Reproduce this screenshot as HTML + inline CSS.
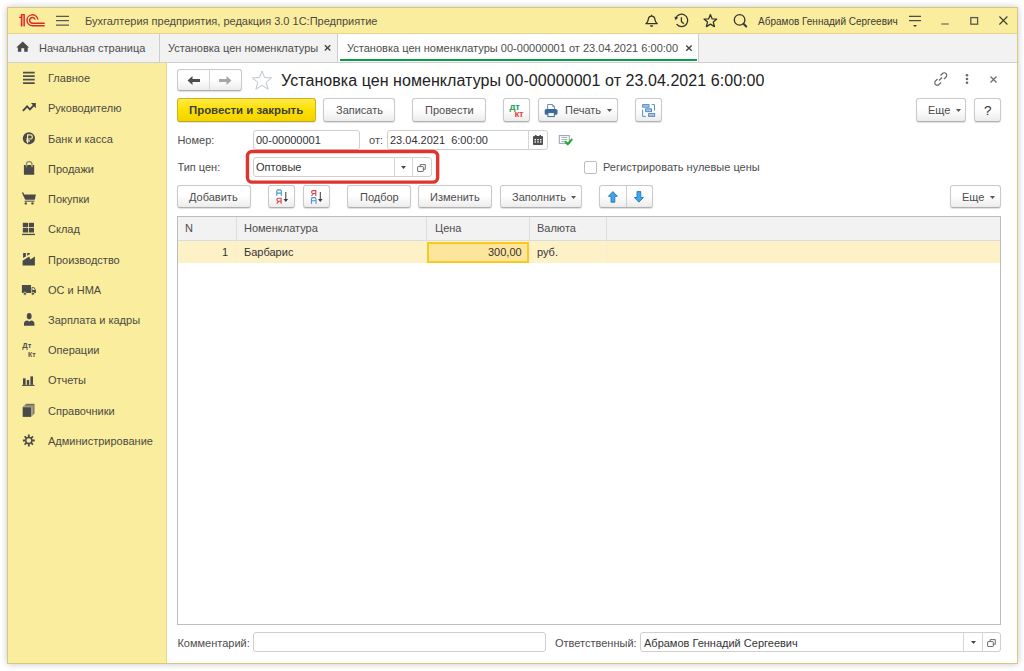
<!DOCTYPE html>
<html><head><meta charset="utf-8">
<style>
*{box-sizing:border-box;margin:0;padding:0}
html,body{width:1024px;height:671px;overflow:hidden;background:#fff;font-family:"Liberation Sans",sans-serif;}
.a{position:absolute}
.t{position:absolute;font-size:11px;line-height:13px;white-space:nowrap;color:#4d4d4d}
#win{position:absolute;left:7px;top:7px;width:1011px;height:657px;border:1px solid #d8c77f;box-shadow:0 0 7px rgba(0,0,0,.22);background:#fbed9e;overflow:hidden}
.btn{position:absolute;border:1px solid #c9c9c9;border-bottom-color:#b0b0b0;border-radius:3px;background:linear-gradient(#fff 0,#fff 45%,#ececec 100%);box-shadow:0 1px 1px rgba(0,0,0,.13)}
.fld{position:absolute;border:1px solid #cfcfcf;border-radius:3px;background:#fff}
svg{position:absolute;overflow:visible}
</style></head><body>
<div id="win"></div>

<!-- title bar -->
<div class="a" style="left:8px;top:8px;width:1009px;height:26px;background:#fbed9e;border-bottom:1px solid #e2d48c"></div>
<div class="t" style="left:85px;top:15px;color:#4a4a40">Бухгалтерия предприятия, редакция 3.0 1С:Предприятие</div>
<div class="t" style="left:758px;top:15px;font-size:10px;color:#3a3a35">Абрамов Геннадий Сергеевич</div>

<!-- tab bar -->
<div class="a" style="left:8px;top:34px;width:1009px;height:29px;background:linear-gradient(#f4f4ee 0,#f2f2f2 1px);border-bottom:1px solid #cfcfcf"></div>
<div class="a" style="left:159px;top:34px;width:1px;height:28px;background:#cdcdcd"></div>
<div class="a" style="left:337px;top:34px;width:1px;height:28px;background:#cdcdcd"></div>
<div class="a" style="left:338px;top:34px;width:360px;height:28px;background:#fff"></div>
<div class="a" style="left:698px;top:34px;width:1px;height:28px;background:#cdcdcd"></div>
<div class="a" style="left:340px;top:59px;width:357px;height:2px;background:#0a9a48"></div>
<div class="t" style="left:39px;top:41.5px;color:#4d4d4d">Начальная страница</div>
<div class="t" style="left:168px;top:41.5px;color:#4d4d4d">Установка цен номенклатуры</div>
<div class="t" style="left:347px;top:41.5px;color:#4d4d4d;letter-spacing:0.02px">Установка цен номенклатуры 00-00000001 от 23.04.2021 6:00:00</div>

<!-- sidebar -->
<div class="a" style="left:8px;top:63px;width:159px;height:600px;background:#fbed9e;border-right:1px solid #e3d89c"></div>


<!-- sidebar items -->
<div class="t" style="left:48px;top:72px;color:#4a4a42">Главное</div>
<div class="t" style="left:48px;top:102px;color:#4a4a42">Руководителю</div>
<div class="t" style="left:48px;top:133px;color:#4a4a42">Банк и касса</div>
<div class="t" style="left:48px;top:163px;color:#4a4a42">Продажи</div>
<div class="t" style="left:48px;top:193px;color:#4a4a42">Покупки</div>
<div class="t" style="left:48px;top:223px;color:#4a4a42">Склад</div>
<div class="t" style="left:48px;top:254px;color:#4a4a42">Производство</div>
<div class="t" style="left:48px;top:284px;color:#4a4a42">ОС и НМА</div>
<div class="t" style="left:48px;top:314px;color:#4a4a42">Зарплата и кадры</div>
<div class="t" style="left:48px;top:344px;color:#4a4a42">Операции</div>
<div class="t" style="left:48px;top:374px;color:#4a4a42">Отчеты</div>
<div class="t" style="left:48px;top:405px;color:#4a4a42">Справочники</div>
<div class="t" style="left:48px;top:435px;color:#4a4a42">Администрирование</div>


<!-- title bar icons -->
<svg style="left:0;top:0" width="1024" height="64" viewBox="0 0 1024 64">
 <g fill="none" stroke="#dd2a28" stroke-width="1.4" stroke-linecap="round">
  <rect x="22.2" y="15.3" width="1.4" height="11" fill="#eb9c80" stroke="none"/>
  <path d="M19.6 17.4 H21.5 M21.5 25.9 V14.6 H24.2 V25.9"/>
  <path d="M37.77 19.05 A5.45 5.45 0 1 0 32.45 25.7 H44.2"/>
  <path d="M34.91 19.06 A2.8 2.8 0 1 0 32.45 23.2 H44.2"/>
 </g>
 <g stroke="#5b5a52" stroke-width="1.25"><path d="M56 16.3 H69 M56 20.6 H69 M56 25.1 H69"/></g>
 <g fill="none" stroke="#35352f" stroke-width="1.3" stroke-linejoin="round">
  <path d="M645.9 23.7 Q647.8 22.2 648.2 19.8 L648.5 18.4 Q649.1 16.2 651.6 16.2 Q654.1 16.2 654.7 18.4 L655 19.8 Q655.4 22.2 657.3 23.7 Z"/>
  <path d="M681.4 17.2 V21.6 L683.8 23.8"/>
  <path d="M675.6 18.5 A6.2 6.2 0 1 1 676.6 24.2"/>
  <path d="M710.4 14.6 L712.2 18.9 L716.8 19.1 L713.3 22.1 L714.4 26.6 L710.4 24.1 L706.4 26.6 L707.5 22.1 L704.0 19.1 L708.6 18.9 Z"/>
  <circle cx="739.6" cy="19.9" r="5.3"/>
 </g>
 <path d="M651.6 14.3 L652.6 16.2 L650.6 16.2 Z" fill="#3c3c38"/>
 <path d="M649.9 25.3 H653.3 Q653.1 27 651.6 27 Q650.1 27 649.9 25.3 Z" fill="#3c3c38"/>
 <path d="M674.3 16.8 L678.3 17.4 L675.6 20.2 Z" fill="#3c3c38"/>
 <path d="M743.5 23.8 L746.2 26.5" stroke="#3c3c38" stroke-width="2.1" stroke-linecap="round"/>
 <g stroke="#4e4d46" stroke-width="1.15"><path d="M909 16.4 H921 M909 20.6 H921"/></g>
 <path d="M913 24.9 H917 L915 26.9 Z" fill="#3c3c38"/>
 <path d="M941.2 24 H948.8" stroke="#7a7560" stroke-width="1.3"/>
 <rect x="970.8" y="17.6" width="6.8" height="6.6" fill="none" stroke="#5a584c" stroke-width="1.3"/>
 <path d="M999.4 16.5 L1007.4 24.5 M1007.4 16.5 L999.4 24.5" stroke="#3c3c38" stroke-width="1.1"/>
 <!-- home -->
 <path d="M22.7 41.4 L29.1 47.6 L27.7 47.6 L27.7 51.8 L24.2 51.8 L24.2 48.2 L21.3 48.2 L21.3 51.8 L17.9 51.8 L17.9 47.6 L16.3 47.6 Z" fill="#4a4a4a"/>
 <g stroke="#454545" stroke-width="1.4"><path d="M324.8 45.3 L330.3 50.5 M330.3 45.3 L324.8 50.5"/><path d="M686.2 45.5 L691.7 50.7 M691.7 45.5 L686.2 50.7"/></g>
</svg>

<!-- sidebar icons -->
<svg style="left:0;top:60px" width="40" height="400" viewBox="0 60 40 400">
 <g stroke="#4f4f4a" stroke-width="1.6"><path d="M23 72.6 H34.7 M23 76.1 H34.7 M23 79.6 H34.7 M23 83.1 H34.7"/></g>
 <path d="M22.9 110.8 L27.1 106.4 L29.9 109.3 L34 105.2" fill="none" stroke="#454545" stroke-width="1.9" stroke-linejoin="miter"/>
 <path d="M30.9 103 L35.8 103 L35.8 108.2 Z" fill="#454545"/>
 <circle cx="28.9" cy="138.3" r="6.1" fill="#4a4a4a"/>
 <path d="M27.6 143.3 V134.9 H30.2 Q32.3 134.9 32.3 136.9 Q32.3 139 30.2 139 H26 M26 140.8 H30" fill="none" stroke="#f4e7a3" stroke-width="1.2"/>
 <path d="M23.9 165 H25.6 L26.4 167.6 L27.3 165 H31.1 L32 167.6 L32.8 165 H34.2 V174.7 H23.9 Z" fill="#4a4a4a"/>
 <path d="M26.4 167.3 V164.3 Q26.4 161.7 29.2 161.7 Q32 161.7 32 164.3 V167.3" fill="none" stroke="#8f8a68" stroke-width="1.2"/>
 <path d="M21.8 192.6 H23.4 L24.2 194.5 H35.9 L34.8 199.8 H25.2 Z" fill="#4a4a4a"/>
 <path d="M24.6 201.2 H34.5" stroke="#4a4a4a" stroke-width="1"/>
 <circle cx="25.8" cy="203.4" r="1.2" fill="#4a4a4a"/><circle cx="32.5" cy="203.4" r="1.2" fill="#4a4a4a"/>
 <g fill="#4a4a4a"><rect x="22.8" y="222.8" width="5.2" height="4.4"/><rect x="28.8" y="222.8" width="5.2" height="4.4"/><rect x="22.8" y="228" width="5.2" height="4.5"/><rect x="28.8" y="228" width="5.2" height="4.5"/><rect x="22" y="233.8" width="13" height="1.3"/></g>
 <path d="M22.6 265.4 V260.7 L29.2 256.6 L30.3 259.6 L34.9 256.6 V265.4 Z M23.1 253.1 H25.9 V256.5 L23.1 258.1 Z M27.2 253.1 H29.8 V254.2 L27.2 255.7 Z" fill="#4a4a4a"/>
 <path d="M21.9 285.1 H31 V293 H21.9 Z M31.6 287.2 H34.2 L35.9 290 V293 H31.6 Z" fill="#4a4a4a"/>
 <path d="M32.4 288 H33.8 L34.9 290 H32.4 Z" fill="#f4e7a3"/>
 <circle cx="24.9" cy="293.7" r="1.5" fill="#4a4a4a" stroke="#fbed9e" stroke-width="0.7"/><circle cx="32.9" cy="293.7" r="1.5" fill="#4a4a4a" stroke="#fbed9e" stroke-width="0.7"/>
 <ellipse cx="29.2" cy="316.2" rx="2.4" ry="3.1" fill="#4a4a4a"/>
 <path d="M24 325.8 V323.5 Q24 320.6 27.3 320.4 L29.2 321.6 L31.1 320.4 Q34.4 320.6 34.4 323.5 V325.8 Z" fill="#4a4a4a"/>
 <g fill="#4a4a4a"><rect x="23" y="378.3" width="2.6" height="6.6"/><rect x="26.8" y="380" width="2.4" height="4.9"/><rect x="30.4" y="376.4" width="2.6" height="8.5"/><rect x="22" y="384.9" width="12.6" height="1"/></g>
 <path d="M25.6 404.6 H34.5 V413.6 L33 415 V405.9 H24 Z" fill="#7d7a66"/>
 <path d="M23.6 405.8 H33 V415.2 L31 416.9 V407.2 H22.6 Z" fill="#a4a084"/>
 <path d="M25.6 404.3 H34.5" stroke="#555" stroke-width="0.9"/>
 <rect x="22.7" y="407.2" width="8.3" height="9.7" fill="#4a4a4a"/>
 <g transform="translate(28.8 440.5)">
  <circle r="3.05" fill="none" stroke="#4a4a4a" stroke-width="1.4"/>
  <g stroke="#4a4a4a" stroke-width="1.8" stroke-linecap="butt"><path d="M0 -5.9 V-3.2 M0 3.2 V5.9 M-5.9 0 H-3.2 M3.2 0 H5.9 M-4.2 -4.2 L-2.3 -2.3 M2.3 2.3 L4.2 4.2 M-4.2 4.2 L-2.3 2.3 M2.3 -2.3 L4.2 -4.2"/></g>
 </g>
</svg>
<div class="a" style="left:22.3px;top:342px;font-size:7.5px;line-height:8px;font-weight:bold;color:#4f4f4f">Дт</div>
<div class="a" style="left:28px;top:350.5px;font-size:7px;line-height:8px;font-weight:bold;color:#4f4f4f">Кт</div>

<!-- content -->
<div class="a" style="left:167px;top:63px;width:850px;height:600px;background:#fff"></div>


<!-- nav buttons -->
<div class="btn" style="left:177px;top:69px;width:65px;height:22px"></div>
<div class="a" style="left:209px;top:70px;width:1px;height:20px;background:#d6d6d6"></div>
<svg style="left:187px;top:75px" width="14" height="11" viewBox="0 0 14 11"><path d="M0.5 5.5 L5.5 1 L5.5 4 L13 4 L13 7 L5.5 7 L5.5 10 Z" fill="#4d4d4d"/></svg>
<svg style="left:219px;top:75px" width="14" height="11" viewBox="0 0 14 11"><path d="M12.5 5.5 L7.5 1 L7.5 4 L0 4 L0 7 L7.5 7 L7.5 10 Z" fill="#a6a6a6"/></svg>
<svg style="left:251px;top:70px" width="22" height="20" viewBox="0 0 22 20"><path d="M11 1 L13.6 7.6 L20.6 7.9 L15.2 12.3 L17.1 19.2 L11 15.4 L4.9 19.2 L6.8 12.3 L1.4 7.9 L8.4 7.6 Z" fill="none" stroke="#bcc4cc" stroke-width="1"/></svg>
<div class="a" style="left:281px;top:71px;font-size:16px;line-height:19px;color:#222;white-space:nowrap;letter-spacing:0.06px">Установка цен номенклатуры 00-00000001 от 23.04.2021 6:00:00</div>

<!-- right header icons -->
<svg style="left:933px;top:72px" width="15" height="14" viewBox="0 0 15 14"><g fill="none" stroke="#6a6a6a" stroke-width="1.2"><path d="M6 8.5 L9 5.5"/><path d="M7.5 3.5 L9.5 1.5 A2.2 2.2 0 0 1 13 5 L11 7"/><path d="M8 10.5 L6 12.5 A2.2 2.2 0 0 1 2.5 9 L4.5 7"/></g></svg>
<svg style="left:965px;top:74px" width="4" height="10" viewBox="0 0 4 10"><g fill="#6a6a6a"><circle cx="2" cy="1.3" r="1.3"/><circle cx="2" cy="5" r="1.3"/><circle cx="2" cy="8.7" r="1.3"/></g></svg>
<svg style="left:990px;top:76px" width="7" height="7" viewBox="0 0 7 7"><path d="M0.5 0.5 L6.5 6.5 M6.5 0.5 L0.5 6.5" stroke="#6a6a6a" stroke-width="1.2"/></svg>

<!-- command bar -->
<div class="a" style="left:177px;top:98px;width:139px;height:24px;border:1px solid #cdb21a;border-bottom-color:#bea416;border-radius:3px;background:linear-gradient(#ffe94a 0,#fce000 50%,#f3d300 100%);box-shadow:0 1px 0 rgba(0,0,0,.1)"></div>
<div class="t" style="left:189px;top:104px;font-weight:bold;color:#3d3d3d;font-size:11.4px">Провести и закрыть</div>
<div class="btn" style="left:323px;top:98px;width:72px;height:24px"></div>
<div class="t" style="left:336px;top:104px">Записать</div>
<div class="btn" style="left:412px;top:98px;width:74px;height:24px"></div>
<div class="t" style="left:425px;top:104px">Провести</div>
<div class="btn" style="left:503px;top:98px;width:27px;height:24px"></div>
<div class="a" style="left:509.5px;top:101.5px;font-size:9.5px;line-height:10px;font-weight:bold;color:#2a9d52;letter-spacing:-0.2px">дт</div>
<div class="a" style="left:514.5px;top:109px;font-size:9.5px;line-height:10px;font-weight:bold;color:#e04848;letter-spacing:-0.2px">кт</div>
<div class="btn" style="left:538px;top:98px;width:80px;height:24px"></div>
<svg style="left:544px;top:103px" width="14" height="14" viewBox="0 0 14 14"><path d="M3.6 6 V1.5 H8.6 L10.6 3.5 V6" fill="#fff" stroke="#6f8db0" stroke-width="1"/><path d="M8.4 1.5 V3.7 H10.6" fill="none" stroke="#6f8db0" stroke-width="0.8"/><rect x="0.7" y="5.9" width="12.8" height="5.9" rx="1.6" fill="#3a679c"/><rect x="3.9" y="9.6" width="6.4" height="4" fill="#fff" stroke="#3a679c" stroke-width="1"/></svg>
<div class="t" style="left:565px;top:104px">Печать</div>
<svg style="left:607px;top:109px" width="5" height="3" viewBox="0 0 5 3"><path d="M0 0 L5 0 L2.5 3 Z" fill="#555"/></svg>
<div class="btn" style="left:635px;top:98px;width:27px;height:24px"></div>
<svg style="left:632px;top:96px" width="32" height="28" viewBox="632 96 32 28"><g fill="none" stroke="#5a8ec2" stroke-width="1"><path d="M651.6 104.6 H654.5 V110.6"/><path d="M642.6 109.8 V116.4 H645.8"/></g><g fill="#a6c6e6" stroke="#5a8ec2" stroke-width="1"><rect x="642.6" y="104.6" width="6.4" height="2.6"/><rect x="645.6" y="108.8" width="5.9" height="2.8"/><rect x="648.6" y="113.6" width="6" height="2.8"/></g></svg>
<div class="btn" style="left:916px;top:98px;width:50px;height:24px"></div>
<div class="t" style="left:928px;top:104px">Еще</div>
<svg style="left:956px;top:109px" width="5" height="3" viewBox="0 0 5 3"><path d="M0 0 L5 0 L2.5 3 Z" fill="#555"/></svg>
<div class="btn" style="left:974px;top:98px;width:27px;height:24px"></div>
<div class="t" style="left:984px;top:103px;color:#2e2e2e;font-size:13.5px;line-height:15px">?</div>

<!-- number / date -->
<div class="t" style="left:177.4px;top:134px">Номер:</div>
<div class="fld" style="left:253px;top:130px;width:107px;height:20px"></div>
<div class="t" style="left:256px;top:134px;color:#333">00-00000001</div>
<div class="t" style="left:369px;top:134px">от:</div>
<div class="fld" style="left:387px;top:130px;width:161px;height:20px"></div>
<div class="a" style="left:528px;top:131px;width:1px;height:18px;background:#d6d6d6"></div>
<div class="t" style="left:390px;top:134px;color:#333">23.04.2021&nbsp; 6:00:00</div>
<svg style="left:533px;top:135px" width="10" height="10" viewBox="0 0 10 10"><rect x="0" y="1" width="10" height="9" rx="1" fill="#4d4d4d"/><rect x="2" y="0" width="1.5" height="2.5" fill="#4d4d4d"/><rect x="6.5" y="0" width="1.5" height="2.5" fill="#4d4d4d"/><g fill="#fff"><rect x="1.5" y="4" width="1.5" height="1.3"/><rect x="4.25" y="4" width="1.5" height="1.3"/><rect x="7" y="4" width="1.5" height="1.3"/><rect x="1.5" y="6.3" width="1.5" height="1.3"/><rect x="4.25" y="6.3" width="1.5" height="1.3"/><rect x="7" y="6.3" width="1.5" height="1.3"/></g></svg>
<svg style="left:554px;top:130px" width="24" height="20" viewBox="554 130 24 20"><rect x="559.3" y="135.6" width="10" height="7.8" fill="#fff" stroke="#9aa8b8" stroke-width="1.1"/><path d="M561.3 137.5 H567.2 M561.3 139.5 H567.2 M561.3 141.5 H565" stroke="#a0aab6" stroke-width="0.9"/><path d="M565.6 141.9 L567.7 144.2 L571.7 139.6" fill="none" stroke="#1cae2a" stroke-width="2.1" stroke-linecap="round" stroke-linejoin="round"/></svg>

<!-- type price -->
<div class="t" style="left:177.4px;top:161px">Тип цен:</div>
<div class="fld" style="left:253px;top:157px;width:179px;height:20px"></div>
<div class="a" style="left:394px;top:158px;width:1px;height:18px;background:#d6d6d6"></div>
<div class="a" style="left:412px;top:158px;width:1px;height:18px;background:#d6d6d6"></div>
<div class="t" style="left:256px;top:161px;color:#333">Оптовые</div>
<svg style="left:401px;top:166px" width="5" height="3" viewBox="0 0 5 3"><path d="M0 0 L5 0 L2.5 3 Z" fill="#444"/></svg>
<svg style="left:417px;top:164px" width="9" height="8" viewBox="0 0 9 8"><g fill="none" stroke="#5c5c5c" stroke-width="0.9"><path d="M3.2 2.6 V0.6 H8.3 V5.3 H6.3"/><rect x="0.6" y="2.6" width="5.7" height="4.9" rx="0.5"/></g></svg>
<svg style="left:240px;top:144px" width="206" height="46" viewBox="240 144 206 46"><rect x="247.45" y="151.45" width="190.2" height="30.7" rx="4.6" fill="none" stroke="#e0352e" stroke-width="3.4"/></svg>
<div class="a" style="left:584px;top:161px;width:13px;height:13px;border:1px solid #bdbdbd;border-radius:2px;background:#fff"></div>
<div class="t" style="left:603px;top:161px">Регистрировать нулевые цены</div>

<!-- table command bar -->
<div class="btn" style="left:177px;top:185px;width:74px;height:23px"></div>
<div class="t" style="left:189px;top:191px">Добавить</div>
<div class="btn" style="left:268px;top:185px;width:27px;height:23px"></div>
<div class="btn" style="left:303px;top:185px;width:27px;height:23px"></div>

<svg style="left:266px;top:184px" width="66" height="26" viewBox="266 184 66 26">
 <g fill="none" stroke-width="1.1">
  <path d="M276.8 196 V191.2 Q276.8 189.9 278.1 189.9 H280 Q281.3 189.9 281.3 191.2 V196 M276.8 193.1 H281.3" stroke="#4a93d2"/>
  <path d="M281.1 203.7 V198.3 H278.4 Q276.9 198.3 276.9 199.8 Q276.9 201.2 278.4 201.2 H281.1 M278.9 201.2 L276.7 203.7" stroke="#cf4545"/>
  <path d="M315.8 196 V190.6 H313.1 Q311.6 190.6 311.6 192.1 Q311.6 193.5 313.1 193.5 H315.8 M313.6 193.5 L311.4 196" stroke="#cf4545"/>
  <path d="M311.5 203.7 V198.9 Q311.5 197.6 312.8 197.6 H314.7 Q316 197.6 316 198.9 V203.7 M311.5 200.8 H316" stroke="#4a93d2"/>
 </g>
 <g stroke="#3a3a3a" stroke-width="1"><path d="M285.8 192 V199.5 M320.3 192 V199.5"/></g>
 <g fill="#3a3a3a"><path d="M283.5 198.9 H288.1 L285.8 201.9 Z M318 198.9 H322.6 L320.3 201.9 Z"/></g>
</svg>
<div class="btn" style="left:347px;top:185px;width:64px;height:23px"></div>
<div class="t" style="left:360px;top:191px">Подбор</div>
<div class="btn" style="left:418px;top:185px;width:74px;height:23px"></div>
<div class="t" style="left:430px;top:191px">Изменить</div>
<div class="btn" style="left:500px;top:185px;width:82px;height:23px"></div>
<div class="t" style="left:512px;top:191px">Заполнить</div>
<svg style="left:571px;top:196px" width="5" height="3" viewBox="0 0 5 3"><path d="M0 0 L5 0 L2.5 3 Z" fill="#555"/></svg>
<div class="btn" style="left:599px;top:185px;width:54px;height:23px"></div>
<div class="a" style="left:626px;top:186px;width:1px;height:21px;background:#d0d0d0"></div>
<svg style="left:608px;top:191px" width="10" height="12" viewBox="0 0 10 12"><path d="M4.9 0.6 L9.4 5.3 L6.8 5.3 L6.8 11.2 L3 11.2 L3 5.3 L0.4 5.3 Z" fill="#3fa6ec" stroke="#2474b4" stroke-width="0.9" stroke-linejoin="round"/></svg>
<svg style="left:634px;top:191px" width="10" height="12" viewBox="0 0 10 12"><path d="M4.9 11.2 L9.4 6.5 L6.8 6.5 L6.8 0.6 L3 0.6 L3 6.5 L0.4 6.5 Z" fill="#3fa6ec" stroke="#2474b4" stroke-width="0.9" stroke-linejoin="round"/></svg>
<div class="btn" style="left:950px;top:185px;width:51px;height:23px"></div>
<div class="t" style="left:962px;top:191px">Еще</div>
<svg style="left:990px;top:196px" width="5" height="3" viewBox="0 0 5 3"><path d="M0 0 L5 0 L2.5 3 Z" fill="#555"/></svg>

<!-- table -->
<div class="a" style="left:177px;top:216px;width:824px;height:409px;border:1px solid #bdbdbd;background:#fff"></div>
<div class="a" style="left:178px;top:217px;width:822px;height:24px;background:#f2f2f2;border-bottom:1px solid #dcdcdc"></div>
<div class="a" style="left:178px;top:241px;width:822px;height:22px;background:#fdf1c8"></div>
<div class="a" style="left:236px;top:217px;width:1px;height:23px;background:#dedede"></div><div class="a" style="left:236px;top:241px;width:1px;height:22px;background:#f6ecd2"></div>
<div class="a" style="left:426px;top:217px;width:1px;height:23px;background:#dedede"></div><div class="a" style="left:426px;top:241px;width:1px;height:22px;background:#f6ecd2"></div>
<div class="a" style="left:529px;top:217px;width:1px;height:23px;background:#dedede"></div><div class="a" style="left:529px;top:241px;width:1px;height:22px;background:#f6ecd2"></div>
<div class="a" style="left:606px;top:217px;width:1px;height:23px;background:#dedede"></div><div class="a" style="left:606px;top:241px;width:1px;height:22px;background:#f6ecd2"></div>
<div class="a" style="left:427px;top:242px;width:102px;height:21px;border:2px solid #f8ca20;background:#fde69c"></div>
<div class="t" style="left:185px;top:222px">N</div>
<div class="t" style="left:244px;top:222px">Номенклатура</div>
<div class="t" style="left:435px;top:222px">Цена</div>
<div class="t" style="left:537px;top:222px">Валюта</div>
<div class="t" style="left:222px;top:246px;color:#333">1</div>
<div class="t" style="left:244px;top:246px;color:#333">Барбарис</div>
<div class="t" style="left:488px;top:246px;color:#333">300,00</div>
<div class="t" style="left:537px;top:246px;color:#333">руб.</div>

<!-- footer -->
<div class="t" style="left:177.4px;top:636.6px">Комментарий:</div>
<div class="fld" style="left:253px;top:632px;width:293px;height:20px"></div>
<div class="t" style="left:555px;top:636.6px">Ответственный:</div>
<div class="fld" style="left:640px;top:632px;width:361px;height:20px"></div>
<div class="a" style="left:963px;top:633px;width:1px;height:18px;background:#d6d6d6"></div>
<div class="a" style="left:982px;top:633px;width:1px;height:18px;background:#d6d6d6"></div>
<div class="t" style="left:644px;top:636.6px;color:#333">Абрамов Геннадий Сергеевич</div>
<svg style="left:970.5px;top:641px" width="5" height="3" viewBox="0 0 5 3"><path d="M0 0 L5 0 L2.5 3 Z" fill="#444"/></svg>
<svg style="left:987px;top:639px" width="9" height="8" viewBox="0 0 9 8"><g fill="none" stroke="#5c5c5c" stroke-width="0.9"><path d="M3.2 2.6 V0.6 H8.3 V5.3 H6.3"/><rect x="0.6" y="2.6" width="5.7" height="4.9" rx="0.5"/></g></svg>

</body></html>
